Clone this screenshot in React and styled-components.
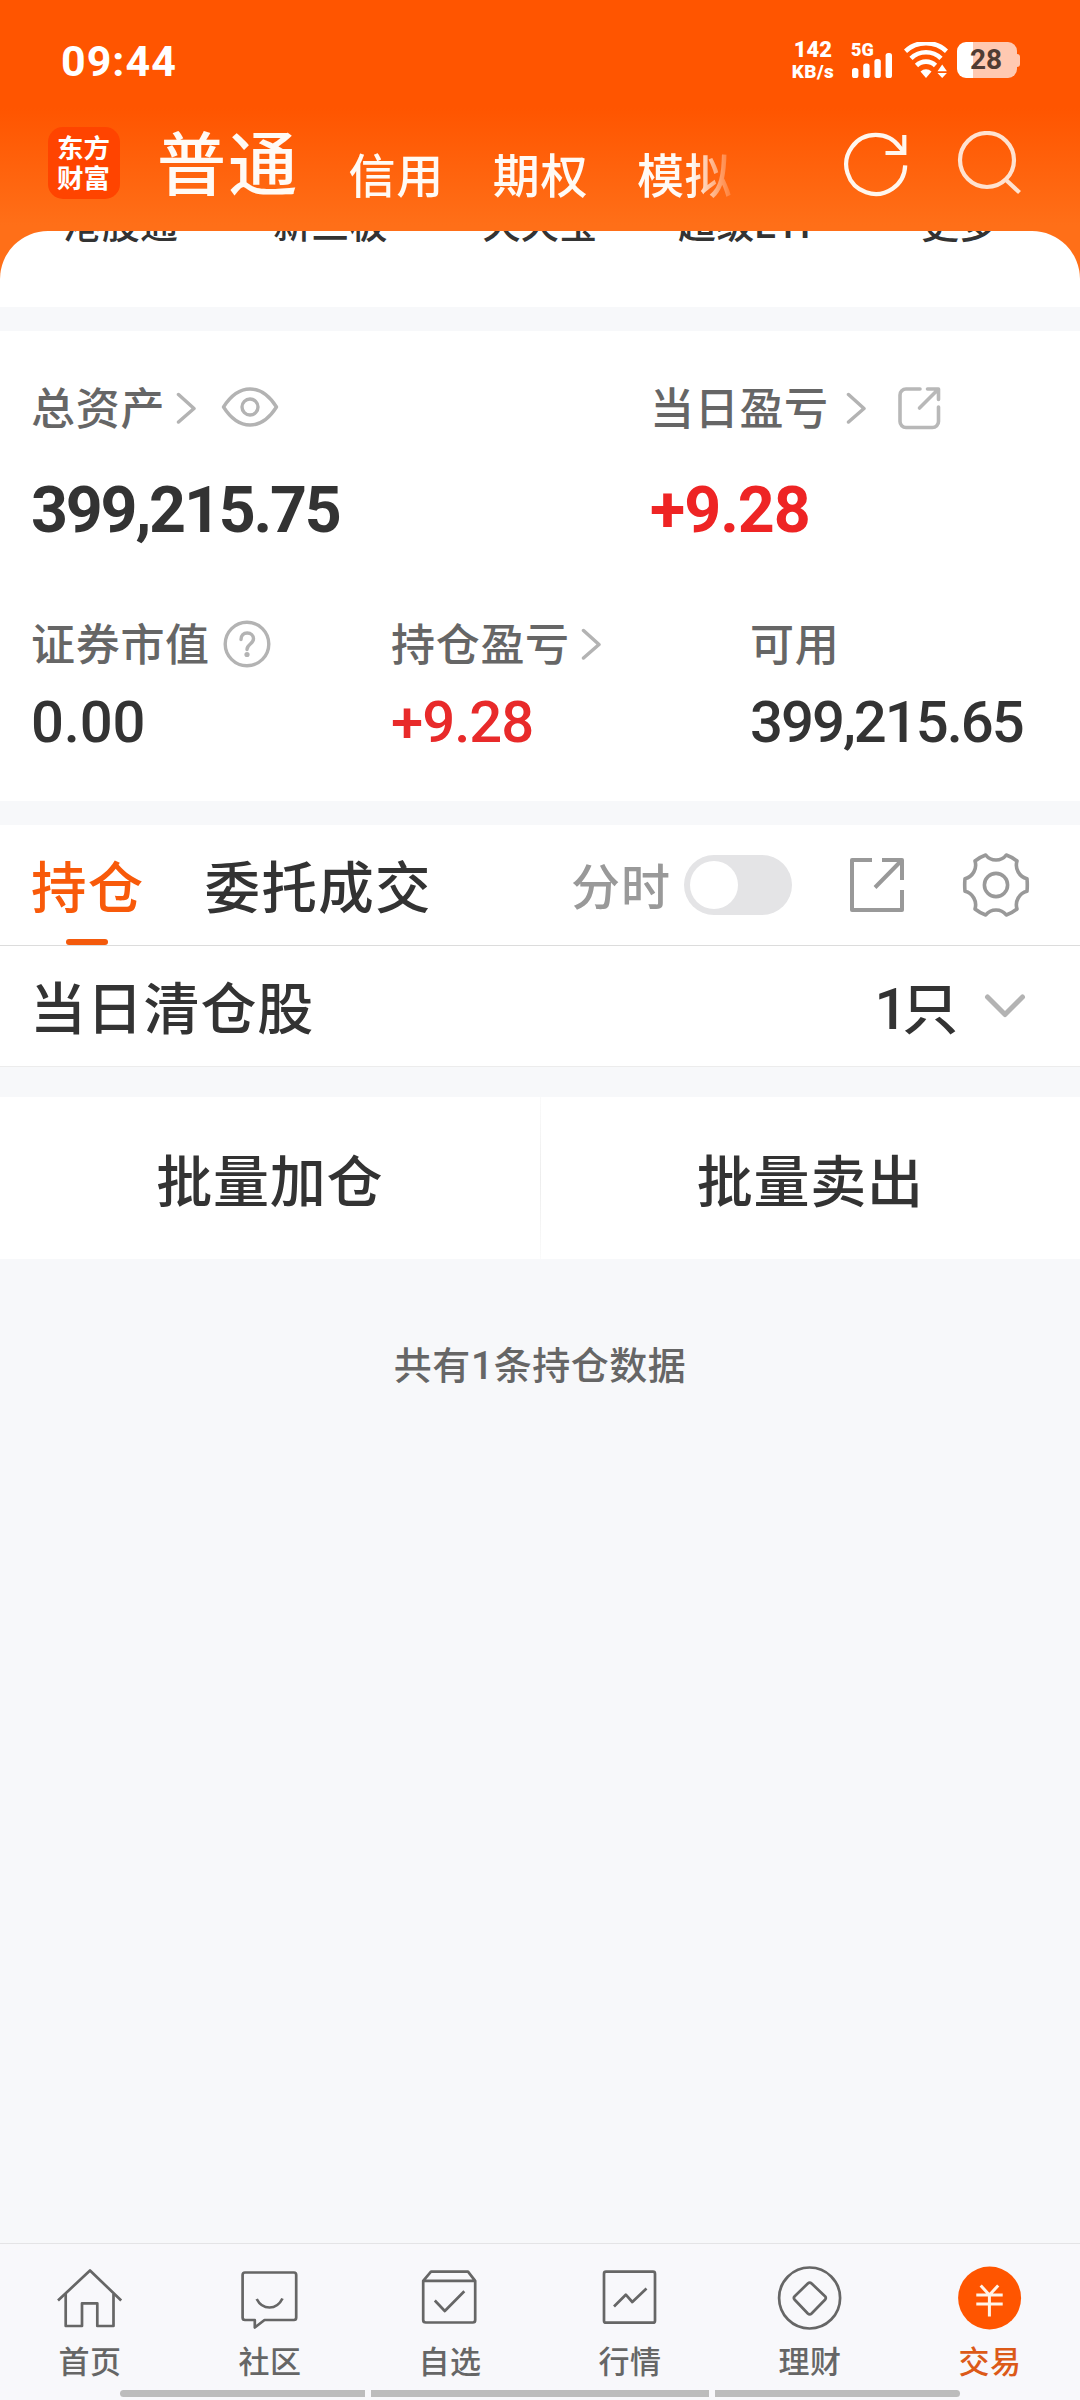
import React from "react";
import styled, { createGlobalStyle } from "styled-components";

const shortcuts = ["港股通", "新三板", "天天宝", "超级ETF", "更多"];
const accountTabs = ["信用", "期权", "模拟"];

function App() {
  return (
    <Page>
      <GlobalStyle />
      <Hero>
        <StatusBar>
          <Clock>09:44</Clock>
          <StatusIcons>
            <NetSpeed>
              <SpeedValue>142</SpeedValue>
              <SpeedUnit>KB/s</SpeedUnit>
            </NetSpeed>
            <Signal>
              <SignalLabel>5G</SignalLabel>
              <SignalBars />
            </Signal>
            <WifiIcon />
            <Battery>
              <BatteryBody>28</BatteryBody>
              <BatteryTip />
            </Battery>
          </StatusIcons>
        </StatusBar>
        <TopBar>
          <Logo>东方财富</Logo>
          <AccountTabs>
            <AccountTab $active>普通</AccountTab>
            {accountTabs.map((tab) => (
              <AccountTab key={tab}>{tab}</AccountTab>
            ))}
          </AccountTabs>
          <TopActions>
            <RefreshIcon />
            <SearchIcon />
          </TopActions>
        </TopBar>
        <ShortcutCard>
          <ShortcutRow>
            {shortcuts.map((name) => (
              <Shortcut key={name}>{name}</Shortcut>
            ))}
          </ShortcutRow>
        </ShortcutCard>
      </Hero>

      <Assets>
        <AssetRow $columns="619px 1fr">
          <div>
            <Label>
              总资产
              <IconSlot $left={11}>
                <RightIcon />
              </IconSlot>
              <IconSlot $left={25}>
                <EyeIcon />
              </IconSlot>
            </Label>
            <Total>399,215.75</Total>
          </div>
          <div>
            <Label>
              当日盈亏
              <IconSlot $left={17}>
                <RightIcon />
              </IconSlot>
              <IconSlot $left={32}>
                <SmallShareIcon />
              </IconSlot>
            </Label>
            <Total $up>+9.28</Total>
          </div>
        </AssetRow>
        <AssetRow $columns="360px 359px 1fr" $second>
          <div>
            <Label>
              证券市值
              <IconSlot $left={13}>
                <HelpIcon />
              </IconSlot>
            </Label>
            <Amount $spacing="-0.2px">0.00</Amount>
          </div>
          <div>
            <Label>
              持仓盈亏
              <IconSlot $left={11}>
                <RightIcon />
              </IconSlot>
            </Label>
            <Amount $up>+9.28</Amount>
          </div>
          <div>
            <Label>可用</Label>
            <Amount $spacing="-2px">399,215.65</Amount>
          </div>
        </AssetRow>
      </Assets>

      <TabBar>
        <Tab $active>持仓</Tab>
        <Tab>委托成交</Tab>
        <TabTools>
          <ToggleLabel>分时</ToggleLabel>
          <Toggle>
            <Knob />
          </Toggle>
          <ShareIcon />
          <GearIcon />
        </TabTools>
      </TabBar>
      <ClearedRow>
        <span>当日清仓股</span>
        <ClearedCount>
          <span>
            <Num $tight>1</Num>只
          </span>
          <DownIcon />
        </ClearedCount>
      </ClearedRow>

      <BatchRow>
        <BatchButton>批量加仓</BatchButton>
        <BatchDivider />
        <BatchButton>批量卖出</BatchButton>
      </BatchRow>
      <Summary>
        共有<Num>1</Num>条持仓数据
      </Summary>

      <BottomNav>
        <NavItems>
          <NavItem>
            <HomeIcon />
            首页
          </NavItem>
          <NavItem>
            <CommunityIcon />
            社区
          </NavItem>
          <NavItem>
            <WatchlistIcon />
            自选
          </NavItem>
          <NavItem>
            <QuotesIcon />
            行情
          </NavItem>
          <NavItem>
            <WealthIcon />
            理财
          </NavItem>
          <NavItem $active>
            <TradeIcon />
            交易
          </NavItem>
        </NavItems>
        <GestureBar>
          <GesturePart $width={245} $round="4px 0 0 4px" />
          <GesturePart $width={338} />
          <GesturePart $width={245} $round="0 4px 4px 0" />
        </GestureBar>
      </BottomNav>
    </Page>
  );
}

export default App;

// icons

const SignalBars = () => (
  <svg width="42" height="26" viewBox="0 0 42 26" fill="#fff">
    <rect x="1" y="16" width="6.4" height="10" rx="2.6" />
    <rect x="12.2" y="11.5" width="6.4" height="14.5" rx="2.6" />
    <rect x="23.4" y="7" width="6.4" height="19" rx="2.6" />
    <rect x="34.6" y="1" width="6.4" height="25" rx="2.6" />
  </svg>
);

const WifiIcon = () => (
  <svg width="44" height="36" viewBox="0 0 44 36" fill="none" stroke="#fff">
    <path d="M1.5 9.2a30 30 0 0 1 41 0" strokeWidth="4.6" />
    <path d="M7 16.4a21.5 21.5 0 0 1 30 0" strokeWidth="4.6" />
    <path d="M12.5 23.5a13.5 13.5 0 0 1 19 0" strokeWidth="4.6" />
    <path d="M16.5 29.5a8 8 0 0 1 11 0L22 36z" fill="#fff" stroke="none" />
    <path d="M33.5 29.3h9.4L38.2 22.5zM33.5 31h9.4L38.2 36z" fill="#fff" stroke="none" />
  </svg>
);

const RefreshIcon = () => (
  <svg width="66" height="66" viewBox="0 0 66 66" fill="none" stroke="#fff6ee" strokeWidth="4.2">
    <path d="M62.2 34.4A29.5 29.5 0 1 1 56.5 16L61 21" />
    <path d="M61.3 4v18H42.5" />
  </svg>
);

const SearchIcon = () => (
  <svg width="66" height="66" viewBox="0 0 66 66" fill="none" stroke="#ffe2d0" strokeWidth="4.2">
    <circle cx="30" cy="29" r="27" />
    <path d="M48.5 48.5L62.5 61.5" />
  </svg>
);

const RightIcon = () => (
  <svg width="20" height="32" viewBox="0 0 20 32" fill="none" stroke="#b3b3b3" strokeWidth="3.5" strokeLinecap="round" strokeLinejoin="round">
    <path d="M2.5 2.5L18 16.5L2.5 30" />
  </svg>
);

const DownIcon = () => (
  <svg width="42" height="28" viewBox="0 0 42 28" fill="none" stroke="#b3b3b3" strokeWidth="5" strokeLinecap="round" strokeLinejoin="round">
    <path d="M3.5 4L21 21.5L38.5 4" />
  </svg>
);

const EyeIcon = () => (
  <svg width="58" height="42" viewBox="0 0 58 42" fill="none" stroke="#b3b3b3" strokeWidth="3.4" strokeLinejoin="round">
    <path d="M2.5 20Q14 2 29 2T55.5 20Q44 38 29 38T2.5 20Z" />
    <circle cx="29" cy="20" r="8" />
  </svg>
);

const SmallShareIcon = () => (
  <svg width="44" height="44" viewBox="0 0 44 44" fill="none" stroke="#b8b8b8" strokeWidth="3.6" strokeLinecap="round" strokeLinejoin="round">
    <path d="M22 3H8a6 6 0 0 0-6 6v26.5a6 6 0 0 0 6 6h26.5a6 6 0 0 0 6-6V21" />
    <path d="M29.5 3H40.5V13.5M40 3.5L21.5 22" />
  </svg>
);

const HelpIcon = () => (
  <svg width="48" height="48" viewBox="0 0 48 48" fill="none" stroke="#b3b3b3" strokeWidth="3.4">
    <circle cx="24" cy="24" r="21.8" />
    <path d="M18 19.5C18 15.5 20.5 13 24.2 13C28 13 30.5 15.5 30.5 18.8C30.5 24 24 24 24 29.5" strokeLinecap="round" />
    <circle cx="24" cy="34.5" r="2.6" fill="#b3b3b3" stroke="none" />
  </svg>
);

const ShareIcon = () => (
  <svg width="56" height="56" viewBox="0 0 56 56" fill="none" stroke="#999" strokeWidth="4" strokeLinejoin="round">
    <path d="M23 3H3V53H53V33" />
    <path d="M33 3H53V23M53 3L26 30.5" />
  </svg>
);

const GearIcon = () => (
  <svg width="68" height="66" viewBox="-34 -33 68 66" fill="none" stroke="#999" strokeWidth="3.6" strokeLinejoin="round">
    <path d="M-10.3-30A13 13 0 0 0 10.3-30Q16-28 21-24A14 14 0 0 0 31-6.3Q31.6 0 31 6.3A14 14 0 0 0 21 24Q16 28 10.3 30A13 13 0 0 0-10.3 30Q-16 28-21 24A14 14 0 0 0-31 6.3Q-31.6 0-31-6.3A14 14 0 0 0-21-24Q-16-28-10.3-30Z" />
    <circle r="11.6" />
  </svg>
);

const NavSvg = ({ children }) => (
  <svg width="72" height="72" viewBox="0 0 72 72" fill="none" stroke="#666" strokeWidth="2.7" strokeLinejoin="round">
    {children}
  </svg>
);

const HomeIcon = () => (
  <NavSvg>
    <path d="M4 38.5L36 8.5L67.2 38.5" />
    <path d="M11.7 32V64H28V41.3H43.3V64H59.5V32" />
  </NavSvg>
);

const CommunityIcon = () => (
  <NavSvg>
    <path d="M11 10.5H60Q62.2 10.5 62.2 13V55.5Q62.2 58 60 58H30.5L20.8 65.5V58H11Q8.6 58 8.6 55.5V13Q8.6 10.5 11 10.5Z" />
    <path d="M22.7 37Q27 45.5 35.5 45.5T48.5 36.5" />
  </NavSvg>
);

const WatchlistIcon = () => (
  <NavSvg>
    <path d="M9.2 18.8L17 9.6H54L61.2 18.8V58Q61.2 60.5 58.8 60.5H11.8Q9.2 60.5 9.2 58ZM9.2 18.9H61.2" />
    <path d="M20.8 38.5L30.8 49L50.3 29.3" />
  </NavSvg>
);

const QuotesIcon = () => (
  <NavSvg>
    <rect x="10" y="9.7" width="51" height="51" rx="2" />
    <path d="M20 44.5L31.8 32.7L38.3 40L52.5 26.5" />
  </NavSvg>
);

const WealthIcon = () => (
  <NavSvg>
    <circle cx="35.6" cy="36" r="30.5" />
    <path d="M33.8 21.5Q35.7 19.7 37.6 21.5L51 34.2Q52.6 36 51 37.8L37.6 51.5Q35.7 53.3 33.8 51.5L20.7 37.8Q19 36 20.7 34.2Z" />
  </NavSvg>
);

const TradeIcon = () => (
  <NavSvg>
    <circle cx="35.6" cy="36" r="31.5" fill="#ff5500" stroke="none" />
    <path d="M26.7 23.5L35.4 33L44.2 23.5M22.3 33H48.7M22.3 42H48.7M35.4 33V54.5" stroke="#fff4e8" strokeWidth="3" />
  </NavSvg>
);

// styles

const GlobalStyle = createGlobalStyle`
  * {
    box-sizing: border-box;
  }
  body {
    margin: 0;
    font-family: "Open Sans", "Noto Sans CJK SC", sans-serif;
    font-weight: 500;
    color: #333;
    background-color: #f7f8fa;
  }
  svg {
    display: block;
    flex-shrink: 0;
  }
`;

const Page = styled.div`
  width: 1080px;
  height: 2400px;
  display: flex;
  flex-direction: column;
  overflow: hidden;
`;

const Hero = styled.header`
  height: 307px;
  display: flex;
  flex-direction: column;
  background: linear-gradient(#ff5500 108px, #ff6f18 225px);
`;

const StatusBar = styled.div`
  height: 112px;
  padding: 42px 60px 0 61px;
  display: flex;
  align-items: flex-start;
  justify-content: space-between;
  color: #fff;
  font-family: Roboto, "Noto Sans CJK SC", sans-serif;
  font-weight: 700;
`;

const Clock = styled.div`
  font-size: 43px;
  line-height: 38px;
  letter-spacing: 1px;
`;

const StatusIcons = styled.div`
  height: 36px;
  display: flex;
  align-items: flex-start;
`;

const NetSpeed = styled.div`
  width: 46px;
  margin-right: 15px;
  display: flex;
  flex-direction: column;
  align-items: center;
  font-weight: 900;
  white-space: nowrap;
`;

const SpeedValue = styled.div`
  font-size: 22px;
  line-height: 16px;
`;

const SpeedUnit = styled.div`
  font-size: 19px;
  line-height: 27px;
  letter-spacing: 0.4px;
`;

const Signal = styled.div`
  width: 42px;
  margin-right: 11px;
`;

const SignalLabel = styled.div`
  height: 10px;
  font-size: 18px;
  line-height: 15px;
  font-weight: 900;
`;

const Battery = styled.div`
  margin-left: 9px;
  display: flex;
  align-items: center;
`;

const BatteryBody = styled.div`
  width: 60px;
  height: 36px;
  padding-right: 2px;
  border-radius: 9px;
  background: linear-gradient(90deg, #fff 16px, #ffc9b1 16px);
  color: #4f3c34;
  font-size: 28px;
  line-height: 36px;
  text-align: center;
`;

const BatteryTip = styled.div`
  width: 3px;
  height: 13px;
  border-radius: 0 3px 3px 0;
  background-color: #ffc9b1;
`;

const TopBar = styled.div`
  height: 119px;
  padding: 0 57px 0 48px;
  display: flex;
`;

const Logo = styled.div`
  width: 72px;
  height: 72px;
  margin-top: 15px;
  padding: 6px 9px;
  border-radius: 15px;
  background-color: #ff4400;
  color: #fff;
  font-size: 26.5px;
  line-height: 30px;
  font-weight: 700;
  word-break: break-all;
`;

const AccountTabs = styled.nav`
  width: 580px;
  height: 119px;
  margin-left: 37px;
  display: flex;
  align-items: flex-start;
  gap: 49px;
  overflow: hidden;
  white-space: nowrap;
  mask-image: linear-gradient(90deg, #000 535px, transparent 582px);
`;

const AccountTab = styled.div`
  color: #fffaf5;
  font-size: ${(props) => (props.$active ? "69px" : "47px")};
  line-height: ${(props) => (props.$active ? "103px" : "126px")};
  letter-spacing: ${(props) => (props.$active ? "2.3px" : "0.6px")};
`;

const TopActions = styled.div`
  margin-left: auto;
  padding-top: 19px;
  display: flex;
  gap: 48px;
`;

const ShortcutCard = styled.div`
  height: 76px;
  border-radius: 48px 48px 0 0;
  background-color: #fff;
  overflow: hidden;
`;

const ShortcutRow = styled.div`
  margin-top: -26px;
  padding: 0 16px;
  display: grid;
  grid-template-columns: repeat(5, 1fr);
`;

const Shortcut = styled.div`
  text-align: center;
  font-family: Roboto, "Noto Sans CJK SC", sans-serif;
  font-size: 38px;
  line-height: 40px;
  letter-spacing: 0.3px;
`;

const Assets = styled.section`
  height: 470px;
  margin-top: 24px;
  padding: 47px 31px 0;
  background-color: #fff;
`;

const AssetRow = styled.div`
  margin-top: ${(props) => (props.$second ? "62px" : "0")};
  display: grid;
  grid-template-columns: ${(props) => props.$columns};
`;

const Label = styled.div`
  height: 60px;
  display: flex;
  align-items: center;
  color: #666;
  font-size: 44px;
  line-height: 60px;
  letter-spacing: 0.7px;
  white-space: nowrap;
`;

const IconSlot = styled.span`
  margin-left: ${(props) => props.$left}px;
`;

const Total = styled.div`
  margin-top: 29px;
  height: 85px;
  color: ${(props) => (props.$up ? "#ee2424" : "#333")};
  font-family: Roboto, sans-serif;
  font-size: 64.5px;
  line-height: 86px;
  font-weight: 700;
  letter-spacing: ${(props) => (props.$up ? "-1px" : "-2.2px")};
  white-space: nowrap;
`;

const Amount = styled.div`
  margin-top: 13px;
  color: ${(props) => (props.$up ? "#e82a2a" : "#333")};
  font-family: Roboto, sans-serif;
  font-size: 58px;
  line-height: 70px;
  letter-spacing: ${(props) => props.$spacing || "-1px"};
  white-space: nowrap;
`;

const Num = styled.span`
  margin-right: ${(props) => (props.$tight ? "-6px" : "0")};
  font-family: Roboto, sans-serif;
  font-size: 1.03em;
  line-height: 0;
`;

const TabBar = styled.div`
  height: 121px;
  margin-top: 24px;
  padding: 0 50px 0 31px;
  display: flex;
  align-items: center;
  gap: 60px;
  border-bottom: 1px solid #dcdcdc;
  background-color: #fff;
`;

const Tab = styled.div`
  position: relative;
  height: 120px;
  color: ${(props) => (props.$active ? "#f85a0a" : "#333")};
  font-size: 55.5px;
  line-height: 124px;
  letter-spacing: 1.3px;

  &::after {
    content: "";
    display: ${(props) => (props.$active ? "block" : "none")};
    position: absolute;
    left: 35px;
    bottom: 0;
    width: 42px;
    height: 6px;
    border-radius: 3px;
    background-color: #f45a0c;
  }
`;

const TabTools = styled.div`
  margin-left: auto;
  display: flex;
  align-items: center;

  svg {
    margin-left: 57px;
  }
`;

const ToggleLabel = styled.div`
  height: 120px;
  color: #999;
  font-size: 49px;
  line-height: 123px;
  letter-spacing: 1px;
`;

const Toggle = styled.div`
  width: 108px;
  height: 60px;
  margin-left: 13px;
  padding: 6px;
  border-radius: 30px;
  background-color: #e4e4e6;
`;

const Knob = styled.div`
  width: 48px;
  height: 48px;
  border-radius: 50%;
  background-color: #fff;
`;

const ClearedRow = styled.div`
  height: 121px;
  padding: 0 54px 0 30px;
  display: flex;
  justify-content: space-between;
  border-bottom: 1px solid #ececec;
  background-color: #fff;
  font-size: 56px;
  line-height: 123px;
  letter-spacing: 0.8px;
`;

const ClearedCount = styled.div`
  height: 122px;
  display: flex;
  align-items: center;

  svg {
    margin-left: 25px;
  }
`;

const BatchRow = styled.div`
  height: 162px;
  margin-top: 30px;
  display: flex;
  align-items: center;
  background-color: #fff;
`;

const BatchButton = styled.div`
  flex: 1;
  height: 162px;
  text-align: center;
  font-size: 56px;
  line-height: 166px;
  letter-spacing: 0.8px;
`;

const BatchDivider = styled.div`
  width: 1px;
  height: 162px;
  background: linear-gradient(#fafafa, #ededed, #fafafa);
`;

const Summary = styled.div`
  margin-top: 80px;
  text-align: center;
  color: #666;
  font-size: 38px;
  line-height: 51px;
  letter-spacing: 0.5px;
`;

const BottomNav = styled.nav`
  height: 157px;
  margin-top: auto;
  border-top: 1px solid #e4e4e6;
  background-color: #f8f8fb;
`;

const NavItems = styled.div`
  height: 146px;
  display: grid;
  grid-template-columns: repeat(6, 1fr);
`;

const NavItem = styled.div`
  padding-top: 18px;
  display: flex;
  flex-direction: column;
  align-items: center;
  gap: 9px;
  color: ${(props) => (props.$active ? "#dc5a18" : "#666")};
  font-size: 31px;
  line-height: 36px;
  letter-spacing: 0.6px;
`;

const GestureBar = styled.div`
  display: flex;
  justify-content: center;
  gap: 6px;
`;

const GesturePart = styled.div`
  width: ${(props) => props.$width}px;
  height: 7px;
  border-radius: ${(props) => props.$round || "0"};
  background-color: #bcbcbc;
`;
